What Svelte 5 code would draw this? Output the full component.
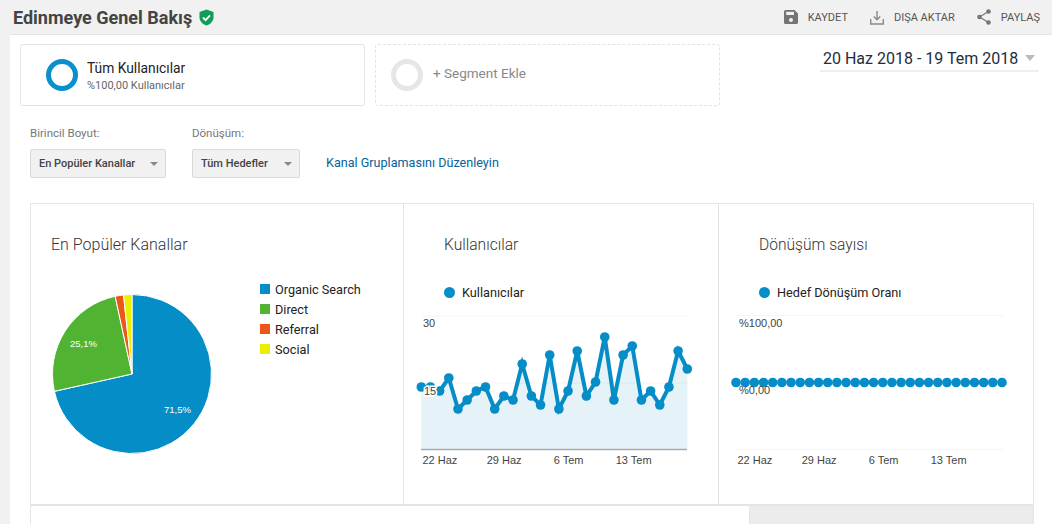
<script>
	const pieCenter = { x: 81, y: 110, r: 79.5 };
	const slices = [
		{ name: 'Organic Search', value: 71.5, color: '#058dc7' },
		{ name: 'Direct', value: 25.1, color: '#50b432' },
		{ name: 'Referral', value: 1.7, color: '#ed561b' },
		{ name: 'Social', value: 1.7, color: '#edef00' }
	];

	function polar(pct) {
		const a = (pct / 100) * Math.PI * 2;
		return [pieCenter.x + pieCenter.r * Math.sin(a), pieCenter.y - pieCenter.r * Math.cos(a)];
	}

	let running = 0;
	const arcs = slices.map((s) => {
		const [x1, y1] = polar(running);
		running += s.value;
		const [x2, y2] = polar(running);
		const large = s.value > 50 ? 1 : 0;
		return {
			color: s.color,
			d: `M${pieCenter.x} ${pieCenter.y}L${x1} ${y1}A${pieCenter.r} ${pieCenter.r} 0 ${large} 1 ${x2} ${y2}Z`
		};
	});

	// y values read off the chart, page pixels minus svg top (315)
	const userYs = [72, 72, 76, 63, 94, 85, 76, 72, 94, 81, 85, 49, 81, 90, 40, 94, 76, 36, 81, 67, 22, 85, 40, 31, 85, 76, 90, 72, 36, 54];
	const stepX = 9.172;
	const userPts = userYs.map((y, i) => [17.3 + i * stepX, y]);
	const userLine = userPts.map((p) => p.join(',')).join(' ');
	const userArea = `17.3,134 ${userLine} ${userPts[29][0]},134`;
	const rateXs = Array.from({ length: 30 }, (_, i) => 17 + i * stepX);

	const dates1 = [
		['22 Haz', 18.5],
		['29 Haz', 82.7],
		['6 Tem', 149.7],
		['13 Tem', 211.7]
	];
</script>

<div class="page">
	<header class="topbar">
		<h1>Edinmeye Genel Bakış</h1>
		<svg class="shield" width="15" height="17" viewBox="0 0 15 17">
			<path d="M7.5 0.5 14.5 3v5.2c0 3.9-3 7-7 8.3-4-1.3-7-4.4-7-8.3V3z" fill="#0f9d58" />
			<path d="M4 8.5l2.6 2.6L11 6.4" fill="none" stroke="#fff" stroke-width="1.8" />
		</svg>
		<div class="actions">
			<span class="action">
				<svg width="14" height="14" viewBox="0 0 14 14">
					<path d="M1.5 0H10.500l3.500 3.500V12.500A1.500 1.500 0 0 1 12.500 14H1.500A1.500 1.500 0 0 1 0 12.500V1.500A1.500 1.500 0 0 1 1.500 0z" fill="#757575" />
					<rect x="2.200" y="1.800" width="7.800" height="3.200" fill="#f1f1f1" />
					<circle cx="7" cy="10" r="2" fill="#f1f1f1" />
				</svg>
				KAYDET
			</span>
			<span class="action">
				<svg width="14" height="15" viewBox="0 0 14 15" fill="none" stroke="#8a8a8a" stroke-width="1.400">
					<path d="M7 1v8.500M3.800 6.500 7 9.800l3.200-3.300" />
					<path d="M0.700 9v5h12.600V9" />
				</svg>
				DIŞA AKTAR
			</span>
			<span class="action">
				<svg width="14" height="16" viewBox="0 0 14 16">
					<path d="M11.500 2.500 2.500 8l9 5.500" fill="none" stroke="#757575" stroke-width="1.200" />
					<circle cx="11.500" cy="2.500" r="2.300" fill="#757575" />
					<circle cx="2.500" cy="8" r="2.300" fill="#757575" />
					<circle cx="11.500" cy="13.500" r="2.300" fill="#757575" />
				</svg>
				PAYLAŞ
			</span>
		</div>
	</header>

	<main>
		<section class="segments">
			<div class="segment">
				<svg class="ring" width="32" height="32" viewBox="0 0 32 32">
					<circle cx="16" cy="16" r="13.500" fill="none" stroke="#0a90cc" stroke-width="5" />
				</svg>
				<div class="segment-text">
					<div class="segment-name">Tüm Kullanıcılar</div>
					<div class="segment-sub">%100,00 Kullanıcılar</div>
				</div>
			</div>
			<div class="segment add">
				<svg class="ring" width="32" height="32" viewBox="0 0 32 32">
					<circle cx="16" cy="16" r="13.500" fill="none" stroke="#e6e6e6" stroke-width="5" />
				</svg>
				<span class="add-label">+ Segment Ekle</span>
			</div>
			<div class="date-picker">
				<span>20 Haz 2018 - 19 Tem 2018</span>
				<i class="date-arrow"></i>
			</div>
		</section>

		<section class="filters">
			<div class="field">
				<div class="field-label">Birincil Boyut:</div>
				<div class="select first">En Popüler Kanallar<i class="arrow"></i></div>
			</div>
			<div class="field">
				<div class="field-label">Dönüşüm:</div>
				<div class="select second">Tüm Hedefler<i class="arrow"></i></div>
			</div>
			<a class="link" href="#top">Kanal Gruplamasını Düzenleyin</a>
		</section>

		<section class="panel">
			<div class="charts">
				<div class="cell pie-cell">
					<h2>En Popüler Kanallar</h2>
					<div class="pie-body">
						<svg class="pie" width="209" height="200" viewBox="0 0 209 200">
							{#each arcs as arc}
								<path d={arc.d} fill={arc.color} stroke="#fff" stroke-width="1" />
							{/each}
							<text x="113" y="149" class="pie-label">71,5%</text>
							<text x="19" y="83" class="pie-label">25,1%</text>
						</svg>
						<ul class="legend">
							{#each slices as s}
								<li><i style="background:{s.color}"></i>{s.name}</li>
							{/each}
						</ul>
					</div>
				</div>

				<div class="cell">
					<h2>Kullanıcılar</h2>
					<div class="series"><i></i>Kullanıcılar</div>
					<svg class="chart" width="314" height="165" viewBox="0 0 314 165">
						<polygon points={userArea} fill="#e5f2f8" />
						<line x1="17" x2="283" y1="1" y2="1" class="grid" />
						<line x1="17" x2="283" y1="68" y2="68" class="grid" />
						<line x1="17" x2="283" y1="134.500" y2="134.500" stroke="#aaa" stroke-width="1.500" />
						<polyline points={userLine} fill="none" stroke="#058dc7" stroke-width="4" />
						{#each userPts as p}
							<circle cx={p[0]} cy={p[1]} r="4.800" fill="#058dc7" />
						{/each}
						<text x="19" y="12" class="tick">30</text>
						<text x="20" y="80" class="tick halo">15</text>
						{#each dates1 as d}
							<text x={d[1]} y="149" class="tick">{d[0]}</text>
						{/each}
					</svg>
				</div>

				<div class="cell last">
					<h2>Dönüşüm sayısı</h2>
					<div class="series"><i></i>Hedef Dönüşüm Oranı</div>
					<svg class="chart" width="314" height="165" viewBox="0 0 314 165">
						<line x1="17" x2="284" y1="0.500" y2="0.500" class="grid" />
						<line x1="17" x2="284" y1="134.500" y2="134.500" class="grid" />
						{#each rateXs as x}
							<circle cx={x} cy="67.500" r="4.800" fill="#058dc7" />
						{/each}
						<text x="20" y="12" class="tick">%100,00</text>
						<text x="20" y="79" class="tick">%0,00</text>
						{#each dates1 as d}
							<text x={d[1]} y="149" class="tick">{d[0]}</text>
						{/each}
					</svg>
				</div>
			</div>
			<div class="lower">
				<div class="lower-card"></div>
				<div class="lower-side"></div>
			</div>
		</section>
	</main>
</div>

<style>
	:global(body) {
		margin: 0;
		overflow: hidden;
		background: #f1f1f1;
		font-family: Roboto, "Liberation Sans", sans-serif;
	}

	.page {
		width: 1052px;
		height: 524px;
		overflow: hidden;
	}

	.topbar {
		display: flex;
		align-items: center;
		height: 34px;
		padding: 0 12px 0 13px;
	}

	h1 {
		margin: 0;
		font-size: 18px;
		font-weight: 700;
		color: #444;
	}

	.shield {
		margin-left: 7px;
	}

	.actions {
		display: flex;
		align-items: center;
		gap: 22px;
		margin-left: auto;
	}

	.action {
		display: flex;
		align-items: center;
		gap: 10px;
		font-size: 11px;
		color: #555;
	}

	main {
		box-sizing: border-box;
		margin-left: 10px;
		height: 490px;
		background: #fff;
		border-top: 1px solid #e5e5e5;
	}

	.segments {
		display: flex;
		padding: 9px 0 0 10px;
		gap: 10px;
	}

	.segment {
		display: flex;
		align-items: center;
		box-sizing: border-box;
		width: 345px;
		height: 62px;
		padding-left: 25px;
		border: 1px solid #e2e2e2;
		border-radius: 3px;
	}

	.segment.add {
		border: 1px dashed #e2e2e2;
		padding-left: 15px;
	}

	.segment-text {
		margin: 3px 0 0 9px;
	}

	.segment-name {
		font-size: 13.800px;
		line-height: 18px;
		color: #222;
	}

	.segment-sub {
		font-size: 11px;
		line-height: 17px;
		color: #666;
	}

	.add-label {
		margin: 0 0 4px 10px;
		font-size: 13.500px;
		color: #888;
	}

	.date-picker {
		display: flex;
		align-items: center;
		box-sizing: border-box;
		width: 219px;
		height: 28px;
		margin-left: auto;
		margin-right: 13px;
		padding: 2px 0 0 3px;
		border-bottom: 2px solid #eee;
		font-size: 16px;
		color: #1f2d3d;
	}

	.date-arrow {
		margin-left: 7px;
		border-style: solid;
		border-width: 6px 5px 0;
		border-color: #bbb transparent transparent;
	}

	.filters {
		display: flex;
		align-items: flex-end;
		gap: 26px;
		margin-top: 20px;
		padding-left: 20px;
	}

	.field-label {
		height: 14px;
		margin-bottom: 9px;
		font-size: 11.500px;
		line-height: 14px;
		color: #777;
	}

	.select {
		display: flex;
		align-items: center;
		justify-content: space-between;
		box-sizing: border-box;
		height: 29px;
		padding: 0 7px 0 8px;
		background: #f1f1f1;
		border: 1px solid #d9d9d9;
		border-radius: 2px;
		font-size: 11px;
		font-weight: 500;
		color: #444;
	}

	.select.first {
		width: 136px;
	}

	.select.second {
		width: 108px;
	}

	.arrow {
		border-style: solid;
		border-width: 4px 4px 0;
		border-color: #888 transparent transparent;
	}

	.link {
		line-height: 29px;
		margin-bottom: 1px;
		font-size: 12.600px;
		color: #05629b;
		text-decoration: none;
	}

	.panel {
		width: 1004px;
		margin: 25px 0 0 20px;
		box-sizing: border-box;
		border: 1px solid #e5e5e5;
		border-bottom: 0;
	}

	.charts {
		display: grid;
		grid-template-columns: 373px 315px 314px;
		height: 302px;
		box-sizing: border-box;
		border-bottom: 2px solid #e5e5e5;
	}

	.cell {
		box-sizing: border-box;
		padding: 31px 0 0 0;
		border-right: 1px solid #e2e2e2;
		overflow: hidden;
	}

	.cell.last {
		border-right: 0;
	}

	h2 {
		margin: 0 0 0 40px;
		font-size: 15.600px;
		font-weight: 300;
		line-height: 20px;
		color: #333;
	}

	.pie-cell h2 {
		margin-left: 20px;
		font-size: 16px;
	}

	.pie-body {
		display: flex;
		margin: 9px 0 0 20px;
	}

	.pie {
		display: block;
		flex: none;
	}

	.pie-label {
		font-family: "Liberation Sans", sans-serif;
		font-size: 9.500px;
		fill: #fff;
	}

	.legend {
		margin: 0;
		padding: 15px 0 0;
		list-style: none;
		font-size: 12.700px;
		color: #222;
	}

	.legend li {
		display: flex;
		align-items: center;
		height: 20px;
	}

	.legend i {
		width: 10px;
		height: 10px;
		margin-right: 5px;
	}

	.series {
		display: flex;
		align-items: center;
		height: 20px;
		margin: 27px 0 13px 40px;
		font-size: 12.700px;
		color: #222;
	}

	.series i {
		width: 11px;
		height: 11px;
		margin-right: 7px;
		border-radius: 50%;
		background: #058dc7;
	}

	.chart {
		display: block;
	}

	.grid {
		stroke: rgba(0, 0, 0, 0.04);
		stroke-width: 1;
	}

	.tick {
		font-family: "Liberation Sans", sans-serif;
		font-size: 11px;
		fill: #444;
	}

	.halo {
		stroke: #fff;
		stroke-width: 3px;
		paint-order: stroke;
	}

	.lower {
		display: flex;
		height: 20px;
	}

	.lower-card {
		width: 718px;
		background: #fff;
		border-right: 1px solid #e5e5e5;
	}

	.lower-side {
		flex: 1;
		background: #ececec;
	}
</style>
